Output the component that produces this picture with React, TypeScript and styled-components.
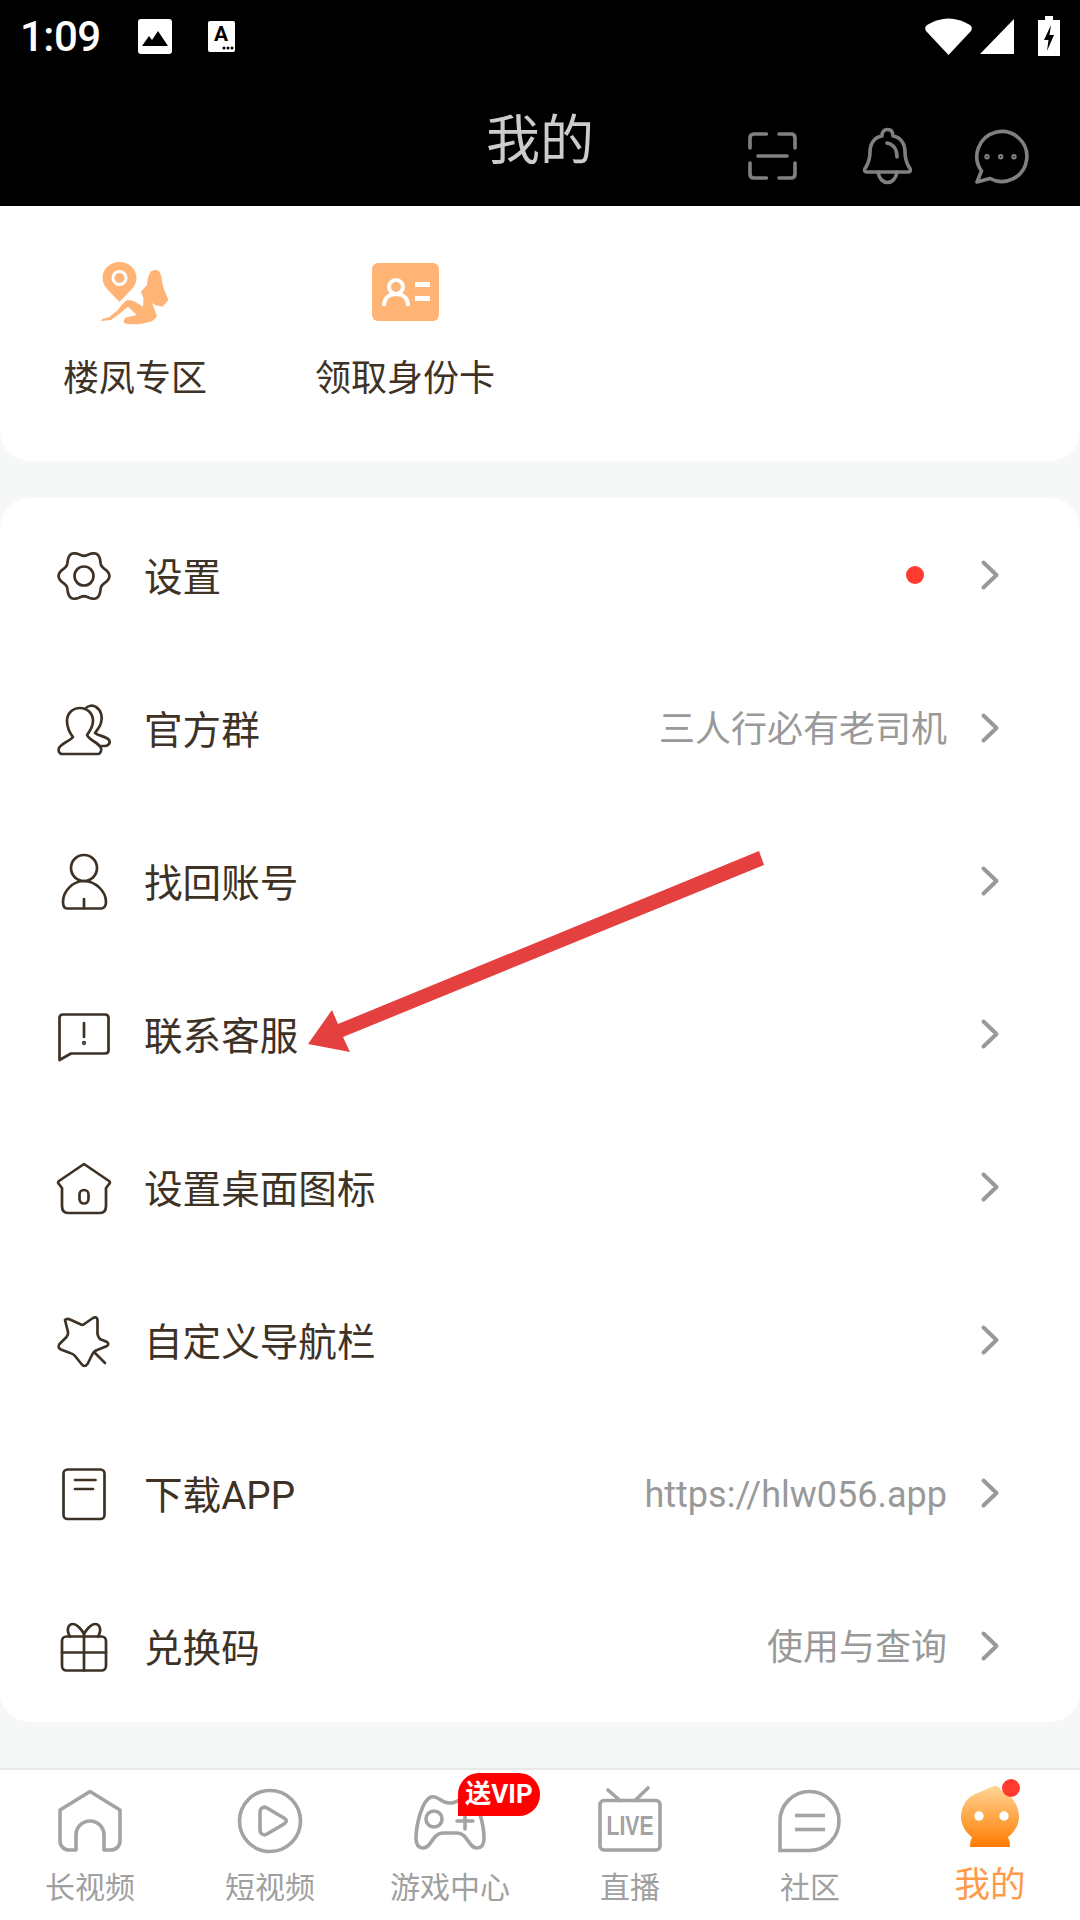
import React from "react";
import styled, { createGlobalStyle } from "styled-components";

const Global = createGlobalStyle`
  html, body { margin: 0; padding: 0; background: #f6f7f7; }
  #root { width: 1080px; height: 1920px; }
  * { box-sizing: border-box; }
`;

const FONT = `Roboto, "Noto Sans CJK SC", sans-serif`;
const INK = "#3d3225";

const Page = styled.div`
  position: relative;
  width: 1080px;
  height: 1920px;
  display: flex;
  flex-direction: column;
  background: #f6f7f7;
  font-family: ${FONT};
  overflow: hidden;
`;

const Header = styled.header`
  height: 206px;
  background: #000;
  display: flex;
  flex-direction: column;
`;

const StatusBar = styled.div`
  height: 70px;
  display: flex;
  align-items: center;
  padding: 2px 20px 0 20px;
`;

const Time = styled.span`
  width: 80px;
  margin-top: 2px;
  color: #fff;
  font-size: 42px;
  font-weight: 500;
  line-height: 50px;
  letter-spacing: -0.5px;
  font-family: Roboto, sans-serif;
  white-space: nowrap;
`;

const StatusLeft = styled.div`
  display: flex;
  align-items: center;
  gap: 36px;
  margin-left: 38px;
  flex: 1;
`;

const StatusRight = styled.div`
  display: flex;
  align-items: center;
`;

const StatusGlyph = styled.svg<{ $ml?: number }>`
  display: block;
  overflow: visible;
  margin-left: ${(p) => p.$ml ?? 0}px;
`;

const TitleBar = styled.div`
  flex: 1;
  display: grid;
  grid-template-columns: 1fr auto 1fr;
`;

const Title = styled.h1`
  margin: 0;
  padding-top: 40px;
  grid-column: 2;
  color: #cccccc;
  font-size: 54px;
  line-height: 64px;
  font-weight: 400;
`;

const HeaderActions = styled.div`
  grid-column: 3;
  display: flex;
  justify-content: flex-end;
  gap: 50px;
  padding: 56px 47px 0 0;
`;

const HeaderIcon = styled.svg`
  width: 64px;
  height: 64px;
  fill: none;
  stroke: #808080;
  stroke-width: 3.6;
  stroke-linecap: round;
  stroke-linejoin: round;
  overflow: visible;
`;

const QuickCard = styled.section`
  height: 255px;
  background: #fff;
  border-radius: 0 0 30px 30px;
  display: flex;
  align-items: flex-start;
  padding-top: 49px;
`;

const QuickItem = styled.div`
  width: 270px;
  display: flex;
  flex-direction: column;
  align-items: center;
`;

const QuickIcon = styled.svg`
  width: 72px;
  height: 72px;
  display: block;
  fill: #ffb375;
`;

const QuickLabel = styled.span`
  margin-top: 26px;
  color: ${INK};
  font-size: 36px;
  line-height: 52px;
`;

const MenuCard = styled.section`
  margin-top: 37px;
  background: #fff;
  border-radius: 30px;
  height: 1224px;
`;

const Row = styled.div`
  height: 153px;
  display: flex;
  align-items: center;
  padding: 0 82px 0 56px;
`;

const RowIcon = styled.svg`
  width: 56px;
  height: 56px;
  flex: none;
  fill: none;
  stroke: ${INK};
  stroke-width: 2.7;
  stroke-linecap: round;
  stroke-linejoin: round;
  overflow: visible;
`;

const RowLabel = styled.span`
  margin: 7px 0 0 32px;
  flex: 1;
  color: ${INK};
  font-size: 38.6px;
  line-height: 50px;
`;

const RowValue = styled.span`
  margin-top: 5px;
  color: #999;
  font-size: 36px;
  line-height: 50px;
`;

const RowDot = styled.span`
  width: 18px;
  height: 18px;
  border-radius: 50%;
  background: #ff3b30;
  margin-right: 23px;
`;

const Chevron = styled.svg`
  width: 16px;
  height: 28px;
  flex: none;
  margin-left: 35px;
  fill: none;
  stroke: #999;
  stroke-width: 4;
  stroke-linecap: round;
  stroke-linejoin: round;
  overflow: visible;
`;

const Nav = styled.nav`
  position: absolute;
  left: 0;
  right: 0;
  bottom: 0;
  height: 152px;
  background: #fff;
  border-top: 2px solid #e8e8e8;
  display: grid;
  grid-template-columns: repeat(6, 180px);
`;

const Tab = styled.div`
  position: relative;
  display: flex;
  flex-direction: column;
  align-items: center;
  padding-top: 15px;
`;

const TabIcon = styled.svg`
  width: 80px;
  height: 70px;
  display: block;
  fill: none;
  stroke: #a3a3a3;
  stroke-width: 3.6;
  stroke-linecap: round;
  stroke-linejoin: round;
  overflow: visible;
`;

const TabLabel = styled.span<{ $active?: boolean }>`
  margin-top: ${(p) => (p.$active ? 12 : 15)}px;
  color: ${(p) => (p.$active ? "#ff9a4a" : "#a0a0a0")};
  font-size: ${(p) => (p.$active ? 35.5 : 30)}px;
  line-height: 36px;
`;

const VipBadge = styled.span`
  position: absolute;
  left: 98px;
  top: 3px;
  width: 82px;
  height: 43px;
  background: #f00;
  color: #fff;
  border-radius: 21px 21px 21px 0;
  font-size: 26px;
  font-weight: 700;
  line-height: 43px;
  text-align: center;
  white-space: nowrap;
`;

const TabDot = styled.span`
  position: absolute;
  left: 102px;
  top: 9px;
  width: 18px;
  height: 18px;
  border-radius: 50%;
  background: #ff3b30;
`;

const Arrow = styled.svg`
  position: absolute;
  left: 0;
  top: 0;
  width: 1080px;
  height: 1920px;
  pointer-events: none;
`;

/* ---------- drawings ---------- */

const gearPath = (() => {
  const pts: string[] = [];
  for (let i = 0; i <= 120; i++) {
    const t = (i / 120) * Math.PI * 2;
    const r = 22.8 + 2.6 * Math.cos(6 * t);
    pts.push(`${(28 + r * Math.cos(t)).toFixed(2)} ${(29 + r * Math.sin(t)).toFixed(2)}`);
  }
  return "M" + pts.join("L") + "Z";
})();

const GearIcon = () => (
  <RowIcon viewBox="0 0 56 56">
    <path d={gearPath} />
    <circle cx="28" cy="29" r="9.500" />
  </RowIcon>
);
const GroupIcon = () => (
  <RowIcon viewBox="0 0 56 56">
    <path d="M6 54 C3 54 2 50 3 48 C6 43 14 41 17 37 C13 32 11 26 11 21 C11 13 17 8 24 8 C31 8 37 13 37 21 C37 26 34 31 31 35 C34 41 42 42 45 48 C46 51 44 54 42 54 Z" />
    <path d="M29 9 C32 5 37 5 40 7 C45 10 47 17 45 23 C44 27 41 30 39 33 C42 36 50 36 53 40 C55 43 52 46 49 46 L45 46" />
  </RowIcon>
);
const UserIcon = () => (
  <RowIcon viewBox="0 0 56 56">
    <circle cx="28" cy="15" r="13" />
    <path d="M7 49 C7 38 17 28 28 28 C39 28 50 38 50 49 C50 53 48 55.500 45 55.500 H11 C8 55.500 7 53 7 49 Z" />
    <path d="M28 46 V55" />
  </RowIcon>
);
const AlertIcon = () => (
  <RowIcon viewBox="0 0 56 56">
    <path d="M3.500 54 V12 C3.500 9.500 5 8.500 7 8.500 H49 C51 8.500 52.500 9.500 52.500 12 V44.500 C52.500 46.500 51 47.500 49 47.500 H15 Z" />
    <path d="M28 17 V31" />
    <circle cx="28" cy="37" r="0.800" />
  </RowIcon>
);
const HouseIcon = () => (
  <RowIcon viewBox="0 0 56 56">
    <path d="M28 5 L53 22 Q54.500 23 53.500 24.500 L50 29 V47 C50 52 47.500 54 44 54 H12 C8.500 54 6 52 6 47 V29 L2.500 24.500 Q1.500 23 3 22 Z" />
    <rect x="23.500" y="31" width="9" height="13.500" rx="4.500" />
  </RowIcon>
);
const StarIcon = () => (
  <RowIcon viewBox="0 0 56 56" stroke="#333">
    <path d="M9 8 Q11 6 14 7.500 L25 12.500 Q27 13.500 29 11.500 L37 6 Q41 4 41.500 8 L41.500 22 Q42 25 44 27 L51 30 Q53.500 32 51 34 L40 38.500 Q37.500 40 36.500 42 L31.500 52 Q28.500 56 25.500 52 L19 44 Q17 41.500 14 41 L5 37.500 Q1 35.500 3.500 32 L10.500 25 Q12.500 23 12 20 Z" />
    <path d="M39 41 L49 51" />
  </RowIcon>
);
const DocIcon = () => (
  <RowIcon viewBox="0 0 56 56">
    <rect x="7.500" y="4.500" width="41" height="49.500" rx="4" />
    <path d="M19 15 H39.500" />
    <path d="M19 24 H37" />
  </RowIcon>
);
const GiftIcon = () => (
  <RowIcon viewBox="0 0 56 56">
    <rect x="6" y="18.500" width="44" height="34" rx="4.500" />
    <path d="M6 34.500 H50" />
    <path d="M28 16 V52.500" />
    <path d="M14 18.500 C10 12 12 6 17 6 C21 6 26 12 28 16 C30 12 35 6 39 6 C44 6 46 12 42 18.500" />
  </RowIcon>
);
const ChevronIcon = () => (
  <Chevron viewBox="0 0 16 28">
    <path d="M1.500 1.500 L14.500 14 L1.500 26.500" />
  </Chevron>
);

const rows: { icon: React.ReactNode; label: string; value?: string; dot?: boolean }[] = [
  { icon: <GearIcon />, label: "设置", dot: true },
  { icon: <GroupIcon />, label: "官方群", value: "三人行必有老司机" },
  { icon: <UserIcon />, label: "找回账号" },
  { icon: <AlertIcon />, label: "联系客服" },
  { icon: <HouseIcon />, label: "设置桌面图标" },
  { icon: <StarIcon />, label: "自定义导航栏" },
  { icon: <DocIcon />, label: "下载APP", value: "https://hlw056.app" },
  { icon: <GiftIcon />, label: "兑换码", value: "使用与查询" },
];

export default function App() {
  return (
    <Page>
      <Global />
      <Header>
        <StatusBar>
          <Time>1:09</Time>
          <StatusLeft>
            <StatusGlyph width="34" height="35" viewBox="0 0 34 35">
              <rect x="0" y="0" width="34" height="35" rx="3" fill="#fff" />
              <path d="M4 27 L11 17 L14 21 L20 12 L30 27 Z" fill="#000" />
            </StatusGlyph>
            <StatusGlyph width="27" height="31" viewBox="0 0 27 31">
              <rect x="0" y="0" width="27" height="31" rx="2" fill="#fff" />
              <text x="13" y="20" textAnchor="middle" fontSize="21" fontWeight="700" fontFamily="Roboto, sans-serif" fill="#000">A</text>
              <circle cx="16" cy="27" r="1.500" fill="#000" />
              <circle cx="20" cy="27" r="1.500" fill="#000" />
              <circle cx="24" cy="27" r="1.500" fill="#000" />
            </StatusGlyph>
          </StatusLeft>
          <StatusRight>
            <StatusGlyph width="47" height="37" viewBox="0 0 47 37">
              <path d="M23.500 37 L1 13 Q-1 9 2 7 Q23.500 -6 45 7 Q48 9 46 13 Z" fill="#fff" />
            </StatusGlyph>
            <StatusGlyph $ml={8} width="34" height="35" viewBox="0 0 34 35">
              <path d="M34 0 V35 H0 Z" fill="#fff" />
            </StatusGlyph>
            <StatusGlyph $ml={24} width="22" height="40" viewBox="0 0 22 40">
              <path d="M7 0 H15 V4 H22 V40 H0 V4 H7 Z" fill="#fff" />
              <path d="M13 9 L6 24 H10.500 L9 35 L16 19 H11.500 Z" fill="#000" />
            </StatusGlyph>
          </StatusRight>
        </StatusBar>
        <TitleBar>
          <Title>我的</Title>
          <HeaderActions>
            <HeaderIcon viewBox="0 0 64 64">
              <path d="M9 22 V12 Q9 8 13 8 H25.500" />
              <path d="M38 8 H50 Q54 8 54 12 V22" />
              <path d="M9 37 V48 Q9 52 13 52 H25.500" />
              <path d="M38 52 H50 Q54 52 54 48 V37" />
              <path d="M17 30 H46" />
            </HeaderIcon>
            <HeaderIcon viewBox="0 0 64 64">
              <path d="M12 46 C9 46 9 43 11 41 C14 36 15 33 15 26 C15 17 20 11 27 10 C27 6 29 3.500 32.500 3.500 C36 3.500 38 6 38 10 C45 11 50 17 50 26 C50 33 51 36 54 41 C56 43 56 46 53 46 Z" />
              <path d="M32 17 C38 18 42 23 42 31" />
              <path d="M23 46 C25 60 40 60 42 46" />
            </HeaderIcon>
            <HeaderIcon viewBox="0 0 64 64">
              <path d="M12.500 45 L8 56 L21 52.500 A25 25 0 1 0 12.500 45 Z" />
              <circle cx="18" cy="30.700" r="1" strokeWidth="3.400" />
              <circle cx="31.700" cy="30.700" r="1" strokeWidth="3.400" />
              <circle cx="45" cy="30.700" r="1" strokeWidth="3.400" />
            </HeaderIcon>
          </HeaderActions>
        </TitleBar>
      </Header>

      <QuickCard>
        <QuickItem>
          <QuickIcon viewBox="0 0 72 72">
            <path d="M20.500 7 C30 7 37.500 14 37.500 23 C37.500 28 35 32 32 35 L20.500 47 L9 35 C6 32 3.500 28 3.500 23 C3.500 14 11 7 20.500 7 Z" />
            <circle cx="20.500" cy="23" r="6.500" fill="#ffb375" stroke="#fff" strokeWidth="3" />
            <path d="M56.700 15 C59.500 15 61 17 61.800 20 L64.600 33.300 L69.400 45 L63.600 51.700 L56 50 L53 48 L57.700 60 C57.500 63 55 65.500 51.500 66.700 C45 68.500 38 69.500 32.600 69.300 C28 69 24 68 24.700 66.700 C25 64 26 63 28 62.300 L37.700 60 L29 51.700 L18.800 60 L12 65 L1.600 66 L3.300 64 L10 62.300 L18.800 55 C21 52 25 47 28 45 C32 45 35 46 37.700 47.700 L44 51.700 L44.600 43.300 L41.900 36.700 L48 30 L48.800 23.300 L51.500 16.700 C53 15.500 55 15 56.700 15 Z" />
          </QuickIcon>
          <QuickLabel>楼凤专区</QuickLabel>
        </QuickItem>
        <QuickItem>
          <QuickIcon viewBox="0 0 72 72">
            <rect x="3" y="8" width="67" height="58" rx="6" />
            <circle cx="27" cy="32" r="7" fill="none" stroke="#fff" strokeWidth="4" />
            <path d="M15 51 C15 43 20 39 27 39 C34 39 39 43 39 51" fill="none" stroke="#fff" strokeWidth="4" />
            <rect x="46" y="27" width="15" height="5" fill="#fff" />
            <rect x="46" y="41" width="15" height="5" fill="#fff" />
          </QuickIcon>
          <QuickLabel>领取身份卡</QuickLabel>
        </QuickItem>
      </QuickCard>

      <MenuCard>
        {rows.map((r) => (
          <Row key={r.label}>
            {r.icon}
            <RowLabel>{r.label}</RowLabel>
            {r.dot && <RowDot />}
            {r.value && <RowValue>{r.value}</RowValue>}
            <ChevronIcon />
          </Row>
        ))}
      </MenuCard>

      <Nav>
        <Tab>
          <TabIcon viewBox="0 0 80 70">
            <path d="M26 65 V50 A14 14 0 0 1 54 50 V65 H61 A9 9 0 0 0 70 56 V25 L40 6.500 L10 25 V56 A9 9 0 0 0 19 65 Z" />
          </TabIcon>
          <TabLabel>长视频</TabLabel>
        </Tab>
        <Tab>
          <TabIcon viewBox="0 0 80 70">
            <circle cx="40" cy="36" r="30.500" />
            <path d="M30 27 C30 23 34 21 37 23 L54 33 C57 35 57 37 54 39 L37 49 C34 51 30 49 30 45 Z" />
          </TabIcon>
          <TabLabel>短视频</TabLabel>
        </Tab>
        <Tab>
          <TabIcon viewBox="0 0 80 70">
            <path d="M21 12 C28 10 31 18 40 18 C49 18 52 10 59 12 C68 15 74 40 74 54 C74 60 71 63 67 63 C58 63 58 48 47 48 H33 C22 48 22 63 13 63 C9 63 6 60 6 54 C6 40 12 15 21 12 Z" />
            <circle cx="24" cy="34" r="8" />
            <path d="M47 36 H63 M55 28 V44" />
          </TabIcon>
          <TabLabel>游戏中心</TabLabel>
          <VipBadge>送VIP</VipBadge>
        </Tab>
        <Tab>
          <TabIcon viewBox="0 0 80 70">
            <rect x="10" y="15.500" width="60" height="49.500" rx="4" />
            <path d="M18 5 L30 15.500" />
            <path d="M58 3 L45 15.500" />
            <text x="40" y="50" textAnchor="middle" fontSize="27" fontWeight="700" fontFamily="Liberation Sans, sans-serif" fill="#a3a3a3" stroke="none" textLength="47" lengthAdjust="spacingAndGlyphs">LIVE</text>
          </TabIcon>
          <TabLabel>直播</TabLabel>
        </Tab>
        <Tab>
          <TabIcon viewBox="0 0 80 70">
            <path d="M10 65.500 V36 A29.500 29.500 0 1 1 39.500 65.500 Z" strokeLinejoin="miter" />
            <path d="M25 30.500 H55" strokeLinecap="butt" />
            <path d="M25 44.500 H55" strokeLinecap="butt" />
          </TabIcon>
          <TabLabel>社区</TabLabel>
        </Tab>
        <Tab>
          <TabIcon viewBox="0 0 80 70" stroke="none">
            <defs>
              <linearGradient id="meGrad" x1="0" y1="0" x2="0" y2="1">
                <stop offset="0" stopColor="#ffd595" />
                <stop offset="1" stopColor="#ff7b00" />
              </linearGradient>
            </defs>
            <path d="M23 10 L44 1 Q48 0 52 6 C62 11 69 20 69 32 C69 40 64 48 58 52 Q60 56 60 62 H20 Q20 56 22 52 C16 48 11 40 11 32 C11 22 16 14 23 10 Z" fill="url(#meGrad)" stroke="none" />
            <circle cx="29" cy="31" r="4.700" fill="#fff" stroke="none" />
            <circle cx="54" cy="31" r="4.700" fill="#fff" stroke="none" />
          </TabIcon>
          <TabLabel $active>我的</TabLabel>
          <TabDot />
        </Tab>
      </Nav>

      <Arrow viewBox="0 0 1080 1920">
        <path d="M759 851 L764 865 L343 1037 L350 1052 L308 1044 L332 1010 L338 1024 Z" fill="#e44040" />
      </Arrow>
    </Page>
  );
}
